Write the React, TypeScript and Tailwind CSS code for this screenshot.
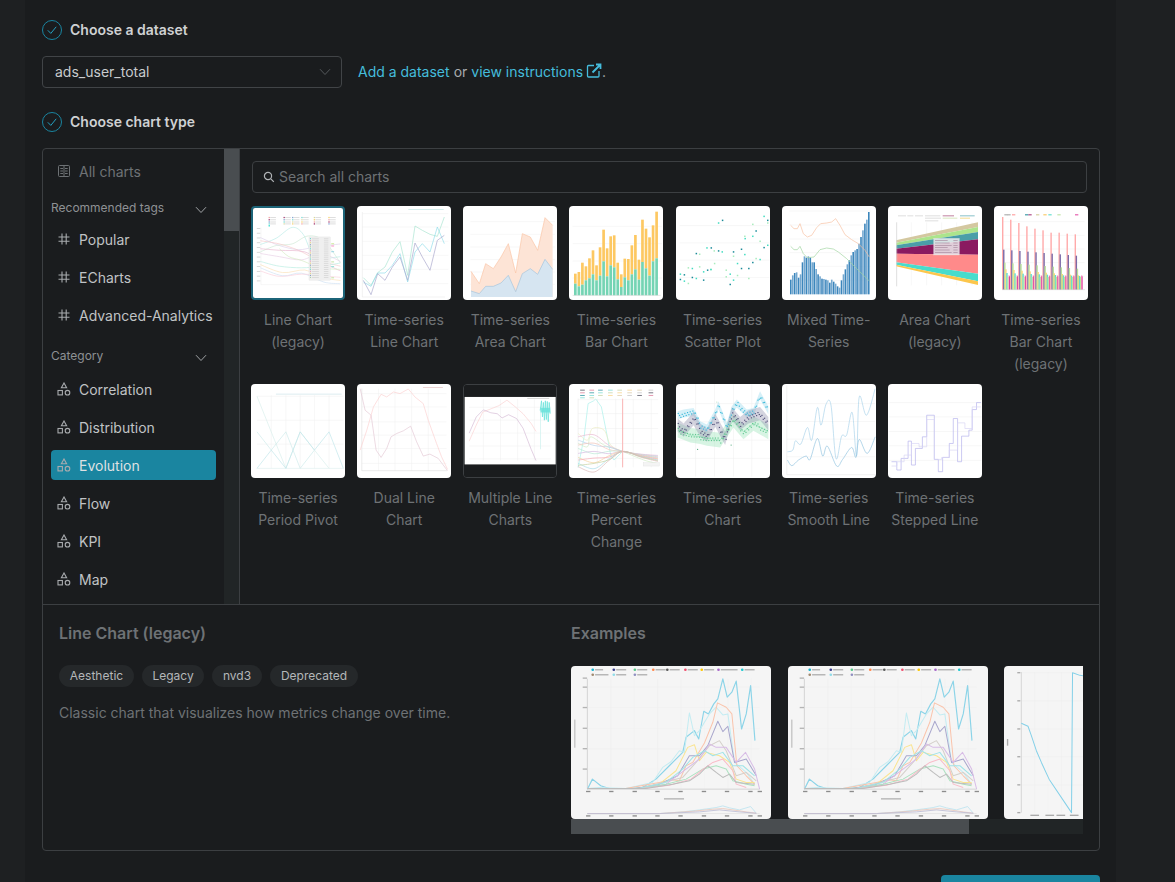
import React from "react";

const L = ({ p, c, w = 2, o = 1 }: { p: string; c: string; w?: number; o?: number }) => (
  <polyline points={p} fill="none" stroke={c} strokeWidth={w} strokeOpacity={o} strokeLinejoin="round" />
);

const smooth = (s: string) => {
  const a = s.split(" ").map((t) => t.split(",").map(Number));
  let d = `M${a[0][0]} ${a[0][1]}`;
  for (let i = 0; i < a.length - 1; i++) {
    const p0 = a[Math.max(0, i - 1)];
    const p1 = a[i];
    const p2 = a[i + 1];
    const p3 = a[Math.min(a.length - 1, i + 2)];
    const c1x = p1[0] + (p2[0] - p0[0]) / 6;
    const c1y = p1[1] + (p2[1] - p0[1]) / 6;
    const c2x = p2[0] - (p3[0] - p1[0]) / 6;
    const c2y = p2[1] - (p3[1] - p1[1]) / 6;
    d += ` C${c1x} ${c1y} ${c2x} ${c2y} ${p2[0]} ${p2[1]}`;
  }
  return d;
};

const S = ({ p, c, w = 2, o = 1 }: { p: string; c: string; w?: number; o?: number }) => (
  <path d={smooth(p)} fill="none" stroke={c} strokeWidth={w} strokeOpacity={o} />
);

const interp = (s: string, x: number) => {
  const a = s.split(" ").map((t) => t.split(",").map(Number));
  for (let i = 0; i < a.length - 1; i++) {
    if (x >= a[i][0] && x <= a[i + 1][0]) {
      return a[i][1] + ((a[i + 1][1] - a[i][1]) * (x - a[i][0])) / (a[i + 1][0] - a[i][0]);
    }
  }
  return a[a.length - 1][1];
};

const Grid = ({ x0, x1, ys, xs = [], y0 = 0, y1 = 0 }: { x0: number; x1: number; ys: number[]; xs?: number[]; y0?: number; y1?: number }) => (
  <g stroke="#efefef" strokeWidth={1.5}>
    {ys.map((y) => (
      <line key={y} x1={x0} x2={x1} y1={y} y2={y} />
    ))}
    {xs.map((x) => (
      <line key={x} y1={y0} y2={y1} x1={x} x2={x} />
    ))}
  </g>
);

const Svg = ({ vb, children }: { vb: string; children: React.ReactNode }) => (
  <svg viewBox={vb} className="block w-full h-full bg-white">
    {children}
  </svg>
);

const Chart1 = () => {
  const cols = ["#f2a0a0", "#a0356e", "#7a9fd0", "#6fd8d0", "#d8d8a0", "#f6cf66"];
  return (
    <Svg vb="17 17 283 283">
      {[66, 113, 140, 169, 208, 254].map((x, i) =>
        [47, 54, 61, 67].map((y, j) => (
          <g key={`${x}${y}`}>
            <rect x={x} y={y - 2} width={4} height={4} fill={cols[(i + j) % 6]} />
            <rect x={x + 5} y={y - 1.5} width={18} height={3} fill="#dcdcdc" />
          </g>
        ))
      )}
      <rect x={66} y={71} width={4} height={4} fill="#16d8c8" />
      <g stroke="#e4e4e4" strokeWidth={1}>
        <line x1={42} x2={42} y1={78} y2={258} />
        <line x1={42} x2={292} y1={258} y2={258} />
      </g>
      {[80, 95, 110, 125, 140, 155, 170, 185, 200, 215, 230, 245].map((y) => (
        <rect key={y} x={29} y={y} width={11} height={2.5} fill="#cfcfcf" />
      ))}
      <S p="40,132 90,112 140,78 175,100 205,165 240,175 292,170" c="#b4ebe6" />
      <S p="40,110 100,135 160,148 210,140 292,130" c="#dcd0ea" />
      <S p="40,155 90,135 140,130 190,105 240,120 292,190" c="#cae8d2" />
      <S p="40,120 100,130 160,150 220,180 292,200" c="#f6c8c8" />
      <S p="40,145 100,150 180,155 240,190 292,215" c="#e8b4ce" />
      <S p="40,185 100,200 170,205 230,200 292,190" c="#b4ece0" />
      <S p="40,195 110,220 180,212 230,235 292,245" c="#fae0b4" />
      <S p="40,205 110,230 170,222 240,250 292,255" c="#cce0f2" />
      <S p="40,215 100,232 170,225 230,230 292,235" c="#facedb" />
      <S p="40,160 100,170 170,180 230,160 292,185" c="#e8cee4" />
      <S p="100,145 130,170 170,182 230,205 292,210" c="#d2eac0" />
      <rect x={193} y={108} width={67} height={136} fill="#efefef" stroke="#e0e0e0" strokeWidth={1} />
      {Array.from({ length: 20 }).map((_, i) => (
        <g key={i}>
          <rect x={196} y={112 + i * 6.4} width={3} height={3} fill={["#40c8c0", "#d880a8", "#e8c860", "#6880b0", "#90c890"][i % 5]} />
          <rect x={202} y={113 + i * 6.4} width={22} height={2} fill="#d0d0d0" />
          <rect x={240} y={113 + i * 6.4} width={14} height={2} fill="#d0d0d0" />
        </g>
      ))}
      {[128, 135, 153, 185, 200, 235].map((y, i) => (
        <rect key={y} x={263} y={y} width={9} height={3} fill={["#c8e890", "#f890c8", "#90d0e0", "#c0e0a0", "#80e0d0", "#c0e0a0"][i]} />
      ))}
    </Svg>
  );
};

const Chart2 = () => (
  <Svg vb="336 17 282 282">
    <Grid x0={352} x1={610} ys={[40, 80, 123, 165, 207, 250]} />
    <line x1={352} x2={352} y1={35} y2={290} stroke="#e4e4e4" strokeWidth={1.5} />
    <line x1={352} x2={600} y1={290} y2={290} stroke="#e4e4e4" strokeWidth={1.5} />
    <rect x={490} y={26} width={106} height={3} fill="#d4ecec" />
    <L p="355,232 378,255 398,217 420,200 442,155 465,124 488,225 510,77 532,90 555,102 577,108 598,50" c="#a8e4d0" />
    <L p="355,245 378,258 398,218 420,218 442,195 465,160 488,245 510,155 532,130 555,155 577,80 598,130" c="#90dcea" />
    <L p="355,240 378,283 398,220 420,240 442,200 465,170 488,240 510,128 532,170 555,210 577,120 598,105" c="#a8a6cc" />
  </Svg>
);

const Chart3 = () => (
  <Svg vb="654 17 282 282">
    <Grid x0={676} x1={930} ys={[64, 102, 140, 178, 215, 252]} />
    <polygon points="678,213 703,250 722,190 745,205 768,170 790,130 812,218 832,100 856,110 878,150 900,52 923,75 923,290 678,290" fill="#fde4d6" />
    <polygon points="678,272 703,280 722,258 745,258 768,248 790,225 812,274 832,220 856,205 878,222 900,177 923,207 923,290 678,290" fill="#d6e5f1" />
    <L p="678,213 703,250 722,190 745,205 768,170 790,130 812,218 832,100 856,110 878,150 900,52 923,75" c="#fac4a4" />
    <L p="678,272 703,280 722,258 745,258 768,248 790,225 812,274 832,220 856,205 878,222 900,177 923,207" c="#a4c4dc" />
  </Svg>
);

const Chart4 = () => {
  const o = [220, 215, 187, 198, 174, 150, 195, 141, 88, 144, 108, 105, 187, 222, 175, 176, 135, 104, 178, 58, 85, 111, 75, 34];
  const g = [250, 258, 253, 240, 234, 222, 240, 226, 183, 228, 195, 201, 237, 260, 231, 240, 222, 207, 238, 185, 204, 226, 183, 174];
  return (
    <Svg vb="975 17 282 282">
      <Grid x0={986} x1={1254} ys={[78, 130, 182, 233]} />
      {o.map((t, i) => (
        <g key={i}>
          <rect x={990 + i * 10.6} y={t} width={8} height={g[i] - t} fill="#fdc862" />
          <rect x={990 + i * 10.6} y={g[i]} width={8} height={285 - g[i]} fill="#74d4b4" />
        </g>
      ))}
      <line x1={986} x2={1250} y1={285} y2={285} stroke="#ccc" strokeWidth={1.5} />
    </Svg>
  );
};

const Chart5 = () => {
  const pts = [[30, 222], [42, 224], [54, 203], [66, 205], [78, 160], [88, 162], [100, 215], [112, 210], [122, 208], [145, 68], [157, 60], [132, 152], [110, 143], [123, 143], [168, 210], [180, 222], [190, 155], [190, 168], [202, 190], [214, 147], [224, 108], [225, 115], [236, 205], [248, 72], [248, 108], [258, 92], [270, 123], [282, 48], [293, 60], [293, 68], [293, 135], [282, 142], [258, 175], [270, 178], [248, 187], [236, 235], [224, 163], [214, 205], [202, 226], [190, 240], [180, 253], [168, 230], [156, 155], [145, 152], [133, 190], [122, 208], [100, 240], [88, 200], [78, 235], [66, 232], [54, 250], [42, 243], [30, 238]];
  return (
    <Svg vb="17 17 283 283">
      <Grid x0={28} x1={298} ys={[76, 128, 180, 232]} />
      {pts.map(([x, y], i) => (
        <rect key={i} x={x - 2} y={y - 2} width={4.5} height={4.5} fill={["#40dcc0", "#1a8a98", "#a8ecbc"][i % 3]} />
      ))}
    </Svg>
  );
};

const Chart6 = () => {
  const b = [238, 225, 218, 216, 232, 222, 186, 168, 172, 168, 172, 186, 186, 206, 222, 228, 235, 236, 238, 240, 247, 238, 244, 250, 258, 262, 240, 222, 207, 192, 180, 165, 155, 150, 146, 130, 110, 90, 70, 58, 35];
  return (
    <Svg vb="336 17 282 282">
      <Grid x0={358} x1={602} ys={[32, 74, 116, 157, 198, 240]} />
      {b.map((t, i) => (
        <rect key={i} x={360 + i * 5.85} y={t} width={4.8} height={282 - t} fill={i % 2 ? "#74a8d0" : "#3c86bc"} />
      ))}
      <L p="362,75 372,85 382,85 390,70 400,100 412,110 425,105 440,82 452,70 470,68 485,65 497,55 510,75 525,103 545,118 565,130 585,150 598,170" c="#f8c0a0" />
      <L p="362,138 372,148 382,148 390,138 400,160 412,172 432,170 450,148 470,143 490,146 505,155 530,175 560,205 598,242" c="#a0d4a0" />
    </Svg>
  );
};

const Chart7 = () => (
  <Svg vb="654 17 282 282">
    <g fill="#dedede">
      <rect x={684} y={45} width={24} height={3} />
      <rect x={712} y={45} width={18} height={3} />
      <rect x={735} y={45} width={24} height={3} />
      <rect x={765} y={45} width={46} height={3} />
      <rect x={818} y={45} width={34} height={3} fill="#c080a0" />
      <rect x={870} y={45} width={44} height={3} fill="#88c0c8" />
      <rect x={765} y={52} width={48} height={3} />
      <rect x={818} y={52} width={44} height={3} fill="#d8e8c0" />
      <rect x={870} y={52} width={30} height={3} fill="#f4dc90" />
      <rect x={765} y={60} width={40} height={3} />
    </g>
    <Grid x0={678} x1={924} ys={[]} xs={[724, 770, 815, 860, 906]} y0={66} y1={255} />
    <polygon points="678,120 924,66 924,80 678,127" fill="#d4c8a0" />
    <polygon points="678,127 924,80 924,95 678,135" fill="#ace48c" />
    <polygon points="678,135 924,95 924,117 678,145" fill="#4a9ea8" />
    <polygon points="678,145 924,117 924,163 678,160" fill="#8a1a60" />
    <polygon points="678,160 924,163 924,220 678,186" fill="#ff8a8a" />
    <polygon points="678,186 924,220 924,243 678,193" fill="#48dccc" />
    <polygon points="678,193 924,243 924,254 678,198" fill="#fcc64c" />
    <line x1={680} x2={680} y1={66} y2={258} stroke="#d8d8d8" strokeWidth={2.5} />
    <rect x={791} y={114} width={77} height={50} fill="#eeeeee" fillOpacity={0.85} stroke="#dddddd" />
    {[120, 127, 134, 141, 148, 155].map((y, i) => (
      <g key={y}>
        <rect x={795} y={y} width={38 + (i % 3) * 6} height={2} fill="#a88aa0" />
        <rect x={850} y={y} width={13} height={2} fill="#a88aa0" />
      </g>
    ))}
  </Svg>
);

const Chart8 = () => {
  const cs = ["#ffaaaa", "#7a6aa8", "#b8e098", "#f8d878", "#60dcd0", "#b8e8a0", "#f8a8c8", "#e040a0"];
  const h0 = [50, 58, 68, 78, 85, 90, 97, 97, 100, 102];
  return (
    <Svg vb="972 17 282 282">
      <Grid x0={996} x1={1244} ys={[64, 105, 146, 187, 228]} />
      {[1003, 1012, 1026, 1065, 1075, 1098, 1120, 1135, 1162, 1215].map((x, i) => (
        <rect key={x} x={x} y={42} width={10} height={3} fill={["#a0a0a0", "#a0a0a0", "#ff9090", "#1a8a98", "#a02a70", "#d0c890", "#f8c050", "#48d8c8", "#b8e098", "#e040a0"][i]} />
      ))}
      {h0.map((t, i) => {
        const x = 996 + i * 24.2;
        const tops = [t, 148 + i * 2, 187 + i * 2, 207 + i * 2, 218 + i, 230, 225];
        return (
          <g key={i}>
            {tops.map((y, j) => (
              <rect key={j} x={x + j * 3.2} y={y} width={4.2} height={268 - y} fill={cs[j]} />
            ))}
            <rect x={x + 21} y={228} width={3} height={40} fill={cs[7]} />
          </g>
        );
      })}
      <line x1={996} x2={1245} y1={268} y2={268} stroke="#ccc" strokeWidth={1.5} />
    </Svg>
  );
};

const Chart9 = () => (
  <Svg vb="17 11 283 283">
    <Grid x0={35} x1={295} ys={[48, 120, 192]} xs={[78, 122, 165, 208, 252]} y0={45} y1={265} />
    <rect x={92} y={40} width={198} height={3} fill="#dcecf0" />
    <line x1={35} x2={295} y1={265} y2={265} stroke="#e0eeee" strokeWidth={2} />
    <L p="35,48 122,265 165,155 208,210 252,265" c="#d8efec" />
    <L p="35,155 78,210 122,155 165,265 208,210" c="#cdeaea" />
    <L p="35,265 78,210 122,265 165,155 208,210 252,155 295,265" c="#c0e6ea" />
  </Svg>
);

const Chart10 = () => (
  <Svg vb="336 11 282 283">
    <Grid x0={350} x1={605} ys={[40, 80, 125, 165, 205, 250]} xs={[400, 450, 500, 550]} y0={25} y1={272} />
    <rect x={534} y={20} width={60} height={3} fill="#ecd4d4" />
    <line x1={350} x2={350} y1={25} y2={272} stroke="#d4d4d4" strokeWidth={1.5} />
    <line x1={350} x2={606} y1={272} y2={272} stroke="#d4d4d4" strokeWidth={1.5} />
    <L p="345,210 365,150 385,80 408,42 425,50 445,35 465,40 490,26 510,50 535,70 550,120 575,190 590,230 608,268" c="#fcd0d0" />
    <L p="345,25 360,90 378,105 393,210 408,232 425,205 438,170 455,160 475,152 497,138 515,185 535,228 555,222 580,235 608,272" c="#e4c8d4" />
  </Svg>
);

const Chart11 = () => (
  <svg viewBox="652 11 285 285" className="block w-full h-full bg-[#1a1c1e]">
    <rect x={654} y={48} width={282} height={209} fill="#ffffff" />
    <Grid x0={668} x1={922} ys={[80, 120, 160, 200, 240]} xs={[712, 765, 818, 870]} y0={55} y1={245} />
    <rect x={848} y={51} width={68} height={3} fill="#d4d4d4" />
    <L p="668,185 690,135 710,95 735,85 760,75 785,58 810,78 835,100 860,130 875,155" c="#fbd0d0" />
    <L p="668,160 690,110 712,88 735,97 755,100 770,113 790,103 815,115 835,145 860,210 875,245" c="#d4b8d4" />
    <line x1={889} x2={889} y1={80} y2={210} stroke="#c8f0ec" strokeWidth={2} />
    <L p="888,90 892,60 895,110 898,65 901,120 904,60 907,118 910,62 913,125 916,65 919,100" c="#70e4dc" w={2.5} />
    <rect x={889} y={82} width={30} height={14} fill="#60e0d8" fillOpacity={0.7} />
  </svg>
);

const Chart12 = () => (
  <Svg vb="975 11 282 283">
    <Grid x0={1002} x1={1243} ys={[58, 100, 145, 190, 235]} xs={[1060, 1115, 1168, 1222]} y0={55} y1={262} />
    {[1008, 1036, 1062, 1092, 1120, 1150, 1180, 1214].map((x, i) =>
      [28, 36, 44, 51].map((y, j) => (
        <rect key={`${x}${y}`} x={x} y={y} width={14} height={3} fill={["#404050", "#d87090", "#1a8a98", "#70d8d0", "#c0d0a0", "#f8d080", "#d8c8a0", "#c0c0c0"][(i + j) % 8]} fillOpacity={j === 3 && i > 1 ? 0 : 0.7} />
      ))
    )}
    <line x1={1002} x2={1002} y1={55} y2={262} stroke="#e4e4e4" strokeWidth={1.5} />
    <L p="1002,262 1020,170 1032,70 1048,62 1055,56 1072,80 1090,170 1100,225 1110,240 1136,214" c="#a8f0ea" />
    <S p="1002,160 1030,180 1045,145 1080,150 1100,195 1136,214" c="#ececc0" />
    <S p="1002,190 1030,200 1040,170 1080,195 1110,205 1136,214 1200,240 1240,250" c="#d0eac4" />
    {[170, 180, 195, 205, 220, 232, 240, 250, 256, 260].map((y, i) => (
      <S key={y} p={`1002,${y} 1050,${y + (i % 2 ? 16 : -6)} 1095,${(y + 214) / 2 + 4} 1136,214 1190,${222 + i} 1242,${226 + i * 2}`} c={["#e8b8d0", "#b8d0ec", "#f4c4b8", "#b8e8d4", "#d4b8e0", "#f6d09c", "#f4a8b4", "#a8dce8", "#c4d09c", "#dcb8b8"][i]} w={2} />
    ))}
    <line x1={1136} x2={1136} y1={55} y2={262} stroke="#fab4b4" strokeWidth={3} />
    <rect x={1198} y={248} width={48} height={10} fill="#f4f4f4" stroke="#ddd" />
  </Svg>
);

const Chart13 = () => {
  const top = "22,105 40,100 70,95 90,135 110,145 135,100 145,75 170,140 185,90 200,70 230,100 250,95 270,45 295,90";
  const mid = "22,135 40,150 70,115 90,150 110,165 135,120 165,175 185,100 210,130 235,110 270,100 295,130";
  const low = "22,150 60,165 90,170 110,175 150,180 190,120 220,155 250,130 295,155";
  const band = (p: string, c: string, d: number, o: number) => {
    const a = p.split(" ").map((s) => s.split(",").map(Number));
    const s = a.map(([x, y]) => `${x},${y - d}`).join(" ") + " " + [...a].reverse().map(([x, y]) => `${x},${y + d}`).join(" ");
    return <polygon points={s} fill={c} fillOpacity={o} />;
  };
  const dots = (p: string, c: string) =>
    Array.from({ length: 68 }).map((_, i) => {
      const x = 22 + i * 4;
      return <rect key={i} x={x} y={interp(p, x) + ((i * 37) % 15) - 7} width={3.5} height={3.5} fill={c} />;
    });
  return (
    <Svg vb="17 11 283 283">
      <Grid x0={20} x1={300} ys={[70, 125, 180, 235]} xs={[76, 133, 190, 245]} y0={11} y1={290} />
      {band(low, "#9ae4b8", 22, 0.4)}
      {band(top, "#8ad4ec", 12, 0.35)}
      {band(mid, "#9494b0", 20, 0.4)}
      <L p={low} c="#70d4a0" w={2} o={0.6} />
      {dots(low, "#60c890")}
      {dots(mid, "#50507a")}
      {dots(top, "#38b8d8")}
      <circle cx={82} cy={208} r={2} fill="#60b088" />
      <circle cx={183} cy={195} r={2} fill="#60b088" />
      <circle cx={140} cy={65} r={1.5} fill="#9cd0ac" />
    </Svg>
  );
};

const Chart14 = () => (
  <Svg vb="336 11 282 283">
    <Grid x0={350} x1={616} ys={[70, 124, 177, 230]} />
    <line x1={350} x2={350} y1={15} y2={284} stroke="#e4e4e4" strokeWidth={1.5} />
    <line x1={350} x2={616} y1={284} y2={284} stroke="#e4e4e4" strokeWidth={1.5} />
    <S p="352,215 368,210 376,182 392,192 412,142 425,180 442,82 453,135 468,72 483,75 498,235 515,168 530,165 547,97 560,228 568,50 590,105 616,25" c="#a8d2ea" />
    <S p="352,240 365,257 385,240 408,228 420,238 442,175 458,228 472,198 500,258 518,238 545,202 558,232 568,178 592,220 616,170" c="#90c2e0" />
  </Svg>
);

const Chart15 = () => (
  <Svg vb="654 11 282 283">
    <Grid x0={656} x1={935} ys={[67, 110, 154, 197, 241]} />
    <L p="664,245 680,245 680,270 693,270 693,235 714,235 714,183 724,183 724,255 736,255 736,205 757,205 757,170 770,170 770,105 793,105 793,238 805,238 805,275 818,275 818,232 838,232 838,190 850,190 850,115 863,115 863,245 875,245 875,168 897,168 897,150 907,150 907,88 920,88 920,67 933,67" c="#b4b0ec" />
    <L p="664,258 680,258 680,245 702,245 702,225 724,225 724,190 747,190 747,200 770,200 770,118 793,118 793,238 815,238 815,232 838,232 838,210 863,210 863,128 885,128 885,145 907,145 907,80 933,80" c="#d8d4f4" />
  </Svg>
);

const Example1 = () => {
  const c = ["#16b4d0", "#3a3f8f", "#5ac88a", "#ff8a50", "#5a5a5a", "#f0506e", "#fcc600", "#a868c8", "#1fc8d0"];
  const xs = [101, 164, 227, 282, 324, 378, 427, 477, 548];
  return (
    <svg viewBox="36 32 598 457" className="block w-full h-full bg-[#f5f5f5]">
      {xs.map((x, i) => (
        <g key={x}>
          <circle cx={x} cy={43} r={4} fill={c[i]} />
          <rect x={x + 7} y={41} width={i === 7 ? 50 : i === 0 ? 24 : 30} height={4} fill="#b0b0b0" />
        </g>
      ))}
      {[[101, "#a08a70", 40], [164, "#90dce8", 30], [227, "#9090c0", 30]].map(([x, col, w]) => (
        <g key={x as number}>
          <circle cx={x as number} cy={58} r={4} fill={col as string} />
          <rect x={(x as number) + 7} y={56} width={w as number} height={4} fill="#b0b0b0" />
        </g>
      ))}
      <Grid x0={85} x1={600} ys={[95, 156, 218, 279, 340]} xs={[155, 225, 295, 365, 435, 505, 575]} y0={70} y1={400} />
      <line x1={85} x2={85} y1={70} y2={400} stroke="#c4c4c4" strokeWidth={2} />
      <line x1={85} x2={600} y1={400} y2={400} stroke="#c4c4c4" strokeWidth={2} />
      <g fill="#8c8c8c">
        {[88, 157, 227, 295, 364, 434, 503, 573, 601].map((x) => (
          <rect key={x} x={x - 7} y={405} width={13} height={4} />
        ))}
        <rect x={314} y={427} width={60} height={4} fill="#b4b4b4" />
        <rect x={46} y={192} width={3} height={84} fill="#b4b4b4" />
        {[68, 95, 156, 218, 279, 340].map((y) => (
          <rect key={y} x={71} y={y - 2} width={13} height={4} fill="#b4b4b4" />
        ))}
        {[88, 157, 227, 295, 364, 434, 503, 573, 601].map((x) => (
          <rect key={x} x={x - 7} y={478} width={13} height={4} />
        ))}
      </g>
      <L p="85,400 100,370 125,390 150,398 200,398 250,395 290,370 330,330 370,290 380,245 405,225 418,250 433,167 447,175 463,145 475,130 490,70 503,125 517,110 530,77 546,220 560,175 573,90 586,255" c="#8cd4e8" w={3.5} />
      <L p="85,398 120,395 200,398 280,380 310,335 335,318 360,285 375,290 390,172 405,240 420,225 450,175 470,155 490,178 505,175 525,320 560,350 585,385" c="#c4ecf2" w={3} />
      <L p="85,398 200,398 300,380 340,372 360,375 380,330 400,320 435,262 460,200 474,142 500,155 517,175 532,330 560,360 585,385" c="#fac4ac" w={3} />
      <L p="85,398 230,398 300,385 350,345 385,275 405,267 420,315 440,290 480,300 510,320 530,370 560,380 585,380" c="#fae490" w={3} />
      <L p="85,398 230,398 300,385 355,360 390,300 420,300 445,270 475,197 490,228 505,212 525,320 560,310 590,360" c="#a8a6cc" w={3} />
      <L p="85,398 240,398 310,380 370,365 410,320 450,270 480,255 500,285 530,360 560,350 590,375" c="#d4d0ca" w={3} />
      <L p="85,398 240,398 320,385 380,340 420,310 450,265 470,275 500,275 530,320 558,290 585,340 600,400" c="#d8bce6" w={3} />
      <L p="85,398 240,398 320,380 370,340 400,305 435,285 460,300 490,290 520,330 550,330 585,360" c="#a0e4e8" w={3} />
      <L p="85,398 250,398 320,385 380,370 430,340 470,330 500,340 520,375 560,385 585,390" c="#ace2c0" w={3} />
      <L p="85,398 250,398 330,388 395,370 425,345 460,320 490,310 520,345 530,385 560,395" c="#f8bcc8" w={3} />
      <L p="85,398 260,398 340,385 390,375 420,355 445,330 470,350 490,365 510,355 530,380 585,385" c="#bcbcbc" w={3} />
      <line x1={85} x2={600} y1={473} y2={473} stroke="#c8c8c8" strokeWidth={1} />
      <L p="85,473 300,473 370,468 420,462 470,455 490,450 510,456 540,462 573,452 590,472" c="#bce4f0" w={2.5} />
      <L p="85,473 300,473 400,466 460,460 490,458 520,462 560,468 590,472" c="#e8c8bc" w={2.5} />
      <L p="85,473 300,473 420,468 480,462 540,468 590,472" c="#bcbcd4" w={2.5} />
    </svg>
  );
};

const Example3 = () => (
  <svg viewBox="674 32 596 457" className="block w-full h-full bg-[#f5f5f5]">
    <Grid x0={725} x1={1250} ys={[52, 136, 220, 303, 387]} xs={[765, 805, 845]} y0={50} y1={470} />
    <line x1={725} x2={725} y1={50} y2={470} stroke="#c8c8c8" strokeWidth={2} />
    <g fill="#aaaaaa">
      <rect x={682} y={250} width={4} height={20} />
      {[52, 136, 220, 303, 387, 470].map((y) => (
        <rect key={y} x={713} y={y - 2} width={9} height={4} />
      ))}
      {[752, 797, 830, 870].map((x) => (
        <rect key={x} x={x} y={476} width={26} height={4} />
      ))}
    </g>
    <L p="725,203 745,212 755,240 770,285 785,320 808,370 875,470 878,52 900,60 1000,70" c="#84d0e8" w={3} />
  </svg>
);

const Check = () => (
  <svg width="20" height="20" viewBox="0 0 20 20" fill="none" className="shrink-0">
    <circle cx="10" cy="10" r="9.5" stroke="#1a85a0" />
    <path d="M5.8 10.3 8.8 13.4 14.2 6.8" stroke="#25a0c0" strokeWidth="1" />
  </svg>
);

const Chevron = ({ c = "#a0a3a6" }: { c?: string }) => (
  <svg width="12" height="8" viewBox="0 0 12 8" fill="none" className="shrink-0">
    <path d="M1 1.2 6 6.5 11 1.2" stroke={c} strokeWidth="1" />
  </svg>
);

const Shapes = () => (
  <svg width="14" height="14" viewBox="0 0 14 14" fill="none" stroke="#a8abae" strokeWidth="1.1" className="shrink-0">
    <path d="M7 1 9.6 5.7H4.4Z" />
    <rect x="1" y="8.5" width="4.4" height="4.4" />
    <circle cx="10.5" cy="10.7" r="2.3" />
  </svg>
);

const HashIcon = () => (
  <svg width="14" height="14" viewBox="0 0 14 14" fill="none" stroke="#a8abae" strokeWidth="1.1" className="shrink-0">
    <path d="M1.5 5H12.5M1.5 9.2H12.5M5 1.5V12.5M9.2 1.5V12.5" />
  </svg>
);

const NavItem = ({ icon, label, active }: { icon: React.ReactNode; label: string; active?: boolean }) => (
  <div className={`flex h-[30px] items-center gap-[8px] whitespace-nowrap rounded-[4px] pl-[6px] text-[14px] ${active ? "bg-[#1a85a0] text-[#dfe1e3]" : "text-[#c0c3c5]"}`}>
    {icon}
    <span>{label}</span>
  </div>
);

const thumbs: { label: string; node: React.ReactNode; sel?: boolean; dark?: boolean }[] = [
  { label: "Line Chart\n(legacy)", node: <Chart1 />, sel: true },
  { label: "Time-series\nLine Chart", node: <Chart2 /> },
  { label: "Time-series\nArea Chart", node: <Chart3 /> },
  { label: "Time-series\nBar Chart", node: <Chart4 /> },
  { label: "Time-series\nScatter Plot", node: <Chart5 /> },
  { label: "Mixed Time-\nSeries", node: <Chart6 /> },
  { label: "Area Chart\n(legacy)", node: <Chart7 /> },
  { label: "Time-series\nBar Chart\n(legacy)", node: <Chart8 /> },
  { label: "Time-series\nPeriod Pivot", node: <Chart9 /> },
  { label: "Dual Line\nChart", node: <Chart10 /> },
  { label: "Multiple Line\nCharts", node: <Chart11 />, dark: true },
  { label: "Time-series\nPercent\nChange", node: <Chart12 /> },
  { label: "Time-series\nChart", node: <Chart13 /> },
  { label: "Time-series\nSmooth Line", node: <Chart14 /> },
  { label: "Time-series\nStepped Line", node: <Chart15 /> },
];

const tagClass = "flex h-[22px] items-center justify-center rounded-[11px] bg-[#25282a] text-[12px] text-[#b4b7b9]";

export default function App() {
  return (
    <div className="flex h-[882px] w-[1175px] overflow-hidden bg-[#1e2022] font-['Inter',sans-serif]">
      <div className="ml-[25px] h-full w-[1091px] shrink-0 bg-[#1a1c1e] pl-[17px]">
        <div className="mt-[20px] flex h-[20px] items-center gap-2 text-[14px] font-semibold text-[#cfd1d3]">
          <Check />
          <span className="-translate-y-px">Choose a dataset</span>
        </div>
        <div className="mt-[16px] flex items-center gap-4">
          <div className="flex h-[32px] w-[300px] items-center justify-between rounded-[4px] border border-[#414447] pl-[12px] pr-[10px] text-[14px] text-[#c8cbcd]">
            <span className="-translate-y-px">ads_user_total</span>
            <Chevron c="#54585b" />
          </div>
          <div className="flex items-center text-[14px] text-[#a8abae]">
            <span className="-translate-y-px text-[#45bcdc]">Add a dataset</span>
            <span className="mx-[4px] -translate-y-px">or</span>
            <span className="-translate-y-px text-[#45bcdc]">view instructions</span>
            <svg width="16" height="16" viewBox="0 0 16 16" fill="none" stroke="#45bcdc" strokeWidth="1.3" className="ml-[3px] -mt-[2px]">
              <path d="M8 2.5H2.5A1 1 0 0 0 1.5 3.5V13A1 1 0 0 0 2.5 14H12A1 1 0 0 0 13 13V8" />
              <path d="M6.5 9.5 14 2M10 1.5H14.5V6" strokeWidth="1.8" />
            </svg>
            <span className="-translate-y-px">.</span>
          </div>
        </div>
        <div className="mt-[24px] flex h-[20px] items-center gap-2 text-[14px] font-semibold text-[#cfd1d3]">
          <Check />
          <span className="-translate-y-px">Choose chart type</span>
        </div>
        <div className="mt-[16px] flex h-[703px] w-[1058px] flex-col rounded-[4px] border border-[#3c3f42]">
          <div className="flex h-[456px] shrink-0 border-b border-[#3c3f42]">
            <div className="flex w-[197px] shrink-0 overflow-hidden border-r border-[#3c3f42]">
              <div className="w-[181px] shrink-0 px-[8px] pt-[8px]">
                <div className="flex h-[30px] items-center gap-[8px] pl-[6px] text-[14px] text-[#6e7275]">
                  <svg width="14" height="14" viewBox="0 0 14 14" fill="none" stroke="#6e7275" strokeWidth="1" className="-mt-[2px] shrink-0">
                    <rect x="1.5" y="1.5" width="11" height="11" rx="1" />
                    <path d="M3.3 4.5H6M8 4.5H10.7M3.3 7H6M8 7H10.7M3.3 9.5H6M8 9.5H10.7M7 1.5V12.5" />
                  </svg>
                  <span className="-translate-y-px">All charts</span>
                </div>
                <div className="mt-[6px] flex h-[30px] items-center justify-between pr-[9px] text-[12px] text-[#8e9194]">
                  <span className="-mt-[1px]">Recommended tags</span>
                  <span className="mt-[4px]"><Chevron /></span>
                </div>
                <div className="mt-[1px] flex flex-col gap-2">
                  <NavItem icon={<HashIcon />} label="Popular" />
                  <NavItem icon={<HashIcon />} label="ECharts" />
                  <NavItem icon={<HashIcon />} label="Advanced-Analytics" />
                </div>
                <div className="mt-[11px] flex h-[30px] items-center justify-between pr-[9px] text-[12px] text-[#8e9194]">
                  <span className="-mt-[1px]">Category</span>
                  <span className="mt-[4px]"><Chevron /></span>
                </div>
                <div className="mt-[3px] flex flex-col gap-2">
                  <NavItem icon={<Shapes />} label="Correlation" />
                  <NavItem icon={<Shapes />} label="Distribution" />
                  <NavItem icon={<Shapes />} label="Evolution" active />
                  <NavItem icon={<Shapes />} label="Flow" />
                  <NavItem icon={<Shapes />} label="KPI" />
                  <NavItem icon={<Shapes />} label="Map" />
                </div>
              </div>
              <div className="h-full w-[15px] shrink-0 bg-[#212526]">
                <div className="h-[82px] bg-[#494d50]" />
              </div>
            </div>
            <div className="flex-1 pl-[12px] pt-[12px]">
              <div className="flex h-[32px] w-[835px] items-center gap-[4px] rounded-[4px] border border-[#3c3f42] pl-[10px] text-[14px] text-[#6e7275]">
                <svg width="12" height="12" viewBox="0 0 12 12" fill="none" stroke="#b0b3b6" strokeWidth="1.2" className="shrink-0">
                  <circle cx="5" cy="5" r="3.6" />
                  <path d="M7.8 7.8 10.8 10.8" />
                </svg>
                <span className="-translate-y-px">Search all charts</span>
              </div>
              <div className="mt-[13px] -ml-px grid grid-cols-[repeat(8,94.14px)] gap-x-3 gap-y-[9px]">
                {thumbs.map((t) => (
                  <div key={t.label} className="flex flex-col items-center">
                    <div
                      className={`h-[94px] w-[94px] overflow-hidden rounded-[4px] ${
                        t.sel ? "border-2 border-[#1c6478]" : t.dark ? "border border-[#3c3f42]" : ""
                      }`}
                    >
                      {t.node}
                    </div>
                    <div className="mt-[9px] min-h-[66px] whitespace-pre-line text-center text-[14px] leading-[22px] text-[#6e7275]">{t.label}</div>
                  </div>
                ))}
              </div>
            </div>
          </div>
          <div className="flex flex-1 pl-[16px] pt-[16px]">
            <div className="w-[512px] shrink-0">
              <div className="text-[16px] font-semibold leading-[24px] text-[#6e7275]">Line Chart (legacy)</div>
              <div className="mt-[20px] flex gap-2">
                <span className={`${tagClass} w-[75px]`}>Aesthetic</span>
                <span className={`${tagClass} w-[62px]`}>Legacy</span>
                <span className={`${tagClass} w-[50px]`}>nvd3</span>
                <span className={`${tagClass} w-[88px]`}>Deprecated</span>
              </div>
              <div className="mt-[15px] text-[14px] leading-[22px] text-[#6e7275]">Classic chart that visualizes how metrics change over time.</div>
            </div>
            <div className="w-[512px] shrink-0">
              <div className="text-[16px] font-semibold leading-[24px] text-[#6e7275]">Examples</div>
              <div className="mt-[21px] w-[512px] overflow-hidden">
                <div className="flex gap-[16.5px]">
                  <div className="h-[153px] w-[200px] shrink-0 overflow-hidden rounded-[4px]"><Example1 /></div>
                  <div className="h-[153px] w-[200px] shrink-0 overflow-hidden rounded-[4px]"><Example1 /></div>
                  <div className="h-[153px] w-[200px] shrink-0 overflow-hidden rounded-[4px]"><Example3 /></div>
                </div>
                <div className="h-[15px] bg-[#212526]">
                  <div className="h-full w-[398px] bg-[#494d50]" />
                </div>
              </div>
            </div>
          </div>
        </div>
        <div className="mt-[24px] ml-[899px] h-[30px] w-[159px] rounded-[4px] bg-[#1a85a0]" />
      </div>
    </div>
  );
}
